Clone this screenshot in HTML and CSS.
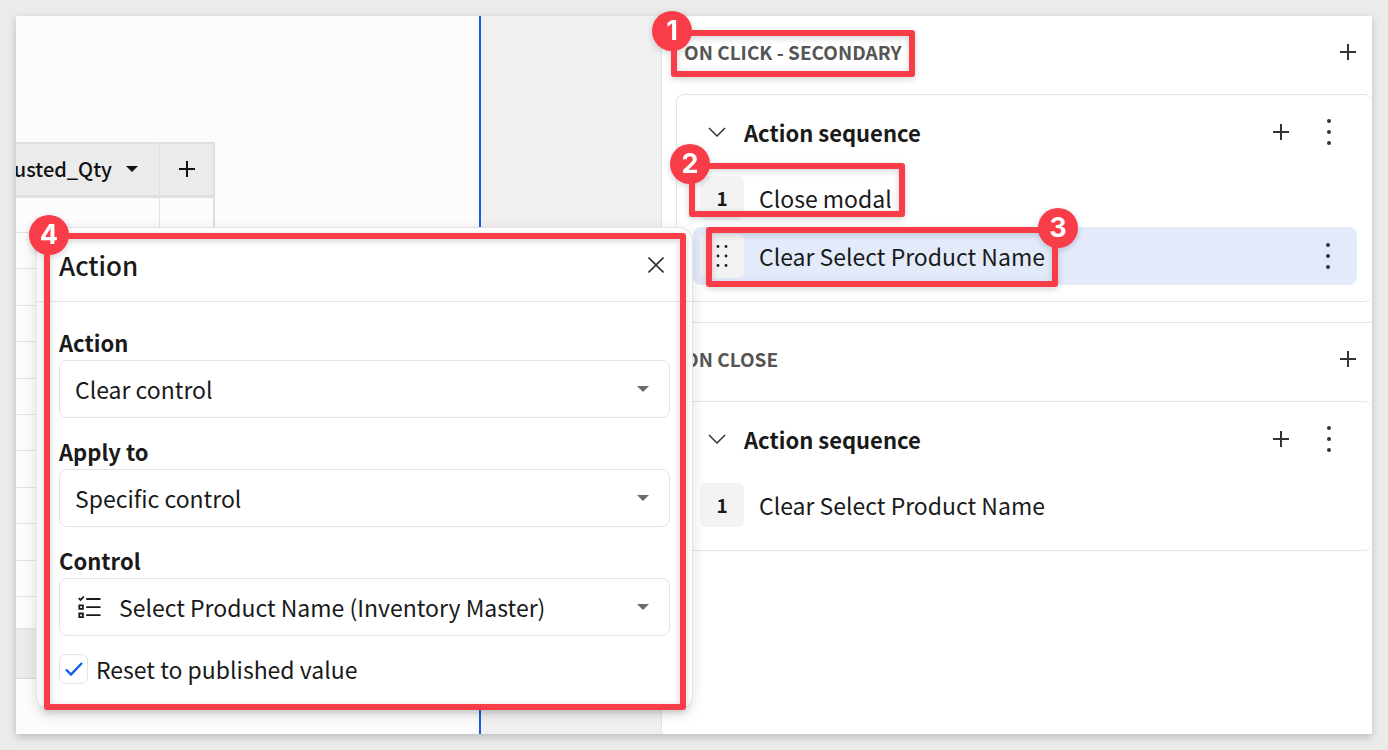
FILE: index.html
```html
<!DOCTYPE html>
<html lang="en">
<head>
<meta charset="utf-8">
<meta name="viewport" content="width=device-width, initial-scale=1">
<title>Action sequences</title>
<link rel="stylesheet" href="styles.css">
</head>
<body>
<svg width="0" height="0" class="defs" aria-hidden="true">
  <symbol id="plus" viewBox="0 0 16 16"><path d="M8 0v16M0 8h16" fill="none" stroke="currentColor" stroke-width="2"/></symbol>
  <symbol id="dots" viewBox="0 0 6 28"><g fill="currentColor"><circle cx="3" cy="3" r="2"/><circle cx="3" cy="14" r="2"/><circle cx="3" cy="25" r="2"/></g></symbol>
  <symbol id="chevron" viewBox="0 0 18 10"><path d="M1 1l8 8 8-8" fill="none" stroke="currentColor" stroke-width="1.5"/></symbol>
  <symbol id="caret" viewBox="0 0 12 6"><path d="M0 0h12L6 6z" fill="currentColor"/></symbol>
</svg>
<main class="frame">
  <section class="sheet">
    <table class="grid">
      <thead>
        <tr>
          <th class="col-name"><div class="col-head"><span>usted_Qty</span><svg class="caret"><use href="#caret"/></svg></div></th>
          <th class="col-add"><button class="icon-btn" aria-label="Add column"><svg class="plus"><use href="#plus"/></svg></button></th>
        </tr>
      </thead>
      <tbody>
        <tr><td></td><td></td></tr>
        <tr><td></td><td></td></tr>
        <tr><td></td><td></td></tr>
        <tr><td></td><td></td></tr>
        <tr><td></td><td></td></tr>
        <tr><td></td><td></td></tr>
        <tr><td></td><td></td></tr>
        <tr><td></td><td></td></tr>
        <tr><td></td><td></td></tr>
        <tr><td></td><td></td></tr>
        <tr><td></td><td></td></tr>
        <tr><td></td><td></td></tr>
      </tbody>
      <tfoot><tr><td></td><td></td></tr></tfoot>
    </table>
  </section>
  <div class="gutter"></div>
  <aside class="panel">
    <section class="event">
      <header class="event-head">
        <h2 class="event-title">ON CLICK - SECONDARY<span class="mark mark-title"><b class="pin">1</b></span></h2>
        <button class="icon-btn" aria-label="Add sequence"><svg class="plus"><use href="#plus"/></svg></button>
      </header>
      <div class="card">
        <div class="card-head">
          <button class="icon-btn" aria-label="Collapse"><svg class="chevron"><use href="#chevron"/></svg></button>
          <h3 class="card-title">Action sequence</h3>
          <button class="icon-btn" aria-label="Add action"><svg class="plus"><use href="#plus"/></svg></button>
          <button class="icon-btn" aria-label="Sequence menu"><svg class="dots"><use href="#dots"/></svg></button>
        </div>
        <ol class="steps">
          <li class="step"><span class="step-wrap"><span class="num">1</span><span class="step-name">Close modal</span><span class="mark mark-step"><b class="pin">2</b></span></span></li>
          <li class="step selected">
            <span class="step-wrap"><span class="num"><svg class="drag" viewBox="0 0 12 24"><g fill="currentColor"><circle cx="2" cy="2.500" r="1.400"/><circle cx="10" cy="2.500" r="1.400"/><circle cx="2" cy="12" r="1.400"/><circle cx="10" cy="12" r="1.400"/><circle cx="2" cy="21.500" r="1.400"/><circle cx="10" cy="21.500" r="1.400"/></g></svg></span><span class="step-name">Clear Select Product Name</span><span class="mark mark-selected"><b class="pin pin-right">3</b></span></span>
            <button class="icon-btn" aria-label="Action menu"><svg class="dots"><use href="#dots"/></svg></button>
          </li>
        </ol>
      </div>
    </section>
    <section class="event">
      <header class="event-head">
        <h2 class="event-title">ON CLOSE</h2>
        <button class="icon-btn" aria-label="Add sequence"><svg class="plus"><use href="#plus"/></svg></button>
      </header>
      <div class="card">
        <div class="card-head">
          <button class="icon-btn" aria-label="Collapse"><svg class="chevron"><use href="#chevron"/></svg></button>
          <h3 class="card-title">Action sequence</h3>
          <button class="icon-btn" aria-label="Add action"><svg class="plus"><use href="#plus"/></svg></button>
          <button class="icon-btn" aria-label="Sequence menu"><svg class="dots"><use href="#dots"/></svg></button>
        </div>
        <ol class="steps">
          <li class="step"><span class="step-wrap"><span class="num">1</span><span class="step-name">Clear Select Product Name</span></span></li>
        </ol>
      </div>
    </section>
  </aside>
  <div class="dialog" role="dialog" aria-labelledby="dialog-title">
    <header class="dialog-head">
      <h2 id="dialog-title" class="dialog-title">Action</h2>
      <button class="icon-btn" aria-label="Close"><svg class="close" viewBox="0 0 16 16"><path d="M.5.5l15 15M15.500.5l-15 15" fill="none" stroke="currentColor" stroke-width="1.600"/></svg></button>
    </header>
    <form class="dialog-body">
      <div class="field">
        <label for="action">Action</label>
        <div class="pick"><select id="action"><option>Clear control</option></select><svg class="caret"><use href="#caret"/></svg></div>
      </div>
      <div class="field">
        <label for="apply">Apply to</label>
        <div class="pick"><select id="apply"><option>Specific control</option></select><svg class="caret"><use href="#caret"/></svg></div>
      </div>
      <div class="field">
        <label for="control">Control</label>
        <div class="pick with-icon">
          <svg class="list" viewBox="0 0 24 24"><g fill="none" stroke="currentColor" stroke-width="1.800"><path d="M.8 3.200l1.700 1.700L5.800 1.600M8.200 4H22.500M8.200 12.200H22.500M8.200 20.200H22.500"/><path d="M1.300 10.300h3.600v3.600H1.300zM1.300 18.500h3.600v3.600H1.300z"/></g></svg>
          <select id="control"><option>Select Product Name (Inventory Master)</option></select><svg class="caret"><use href="#caret"/></svg>
        </div>
      </div>
      <label class="check"><span class="box"><input type="checkbox" checked><svg class="tick" viewBox="0 0 18 14"><path d="M1 7.500l5 5L17 1" fill="none" stroke="currentColor" stroke-width="2.400"/></svg></span>Reset to published value</label>
    </form>
    <span class="mark mark-dialog"><b class="pin pin-dialog">4</b></span>
  </div>
</main>
</body>
</html>
```
FILE: styles.css
```css
:root {
  --line: #e3e3e3;
  --ink: #1a1a1a;
  --red: #f83d48;
}

* { box-sizing: border-box; }

body {
  margin: 0;
  padding: 16px;
  background: #ebebeb;
  color: var(--ink);
  font-family: "Noto Sans CJK SC", "Noto Sans", sans-serif;
  font-size: 23px;
  line-height: 32px;
}

h2, h3 { margin: 0; }

svg { display: block; flex: none; }
.defs { position: absolute; }
.plus { width: 16px; height: 16px; }
.dots { width: 6px; height: 28px; }
.chevron { width: 18px; height: 10px; }
.caret { width: 12px; height: 6px; }
.drag { width: 12px; height: 24px; }
.close { width: 16px; height: 16px; }

.icon-btn {
  display: flex;
  padding: 0;
  border: 0;
  background: none;
  color: #333;
}

.frame {
  position: relative;
  display: grid;
  grid-template-columns: 465fr 180fr 711fr;
  min-height: calc(100vh - 32px);
  background: #fff;
  box-shadow: 0 3px 8px rgba(0, 0, 0, 0.2);
}

/* Spreadsheet */
.sheet {
  padding-top: 126px;
  background: #fcfcfc;
  border-right: 2px solid #1660e0;
}

.gutter { background: #f0f0f0; }

.grid {
  width: 199px;
  table-layout: fixed;
  border-collapse: separate;
  border-spacing: 0;
  color: #111;
}

.grid th {
  height: 56px;
  padding: 0 0 2px;
  background: #ebebeb;
  border-top: 2px solid #e0e0e0;
  border-bottom: 3px solid #e0e0e0;
}

.grid td {
  height: 36px;
  padding: 0;
  border-bottom: 1px solid var(--line);
}

.grid tbody tr:nth-child(5n + 3) td,
.grid tbody tr:nth-child(5n + 5) td { height: 37px; }
.grid tbody tr:first-child td { height: 35px; }
.grid tbody tr:last-child td { height: 32px; }
.grid tfoot td { height: 50px; background: #ebebeb; border-color: #dcdcdc; }
.grid tr > :first-child { width: 144px; border-right: 1px solid var(--line); }
.grid tr > :last-child { width: 55px; border-right: 2px solid #e0e0e0; }

.col-head {
  display: flex;
  justify-content: flex-end;
  align-items: center;
  gap: 14px;
  padding-right: 21px;
  overflow: hidden;
  font-size: 20px;
  font-weight: 500;
}

.col-head span { flex: none; }

.col-add .icon-btn { width: 100%; justify-content: center; color: #111; }

/* Event panel */
.panel { border-left: 1px solid var(--line); }
.event + .event { margin-top: 20px; border-top: 1px solid var(--line); }

.event-head {
  display: flex;
  justify-content: space-between;
  align-items: center;
  height: 72px;
  margin-bottom: 6px;
  padding: 0 16px 0 22px;
}

.event-title {
  position: relative;
  color: #555;
  font-size: 19px;
  font-weight: 700;
  line-height: 30px;
}

.card {
  margin-left: 14px;
  padding: 0 15px 16px 16px;
  border: 1px solid var(--line);
  border-right-width: 0;
  border-radius: 8px;
}

.card-head {
  display: flex;
  align-items: center;
  height: 74px;
  padding: 0 25px 0 15px;
}

.card-title {
  flex: 1;
  margin-left: 18px;
  font-size: 22px;
  font-weight: 700;
}

.card-head .dots { margin-left: 37px; }

.steps { margin: 0; padding: 0; list-style: none; }

.step {
  display: flex;
  justify-content: space-between;
  align-items: center;
  height: 58px;
  padding: 0 26px 0 7px;
  border-radius: 8px;
}

.step.selected { background: #e3eafa; }
.step-wrap { position: relative; display: flex; align-items: center; gap: 15px; }

.num {
  display: flex;
  justify-content: center;
  align-items: center;
  width: 44px;
  height: 44px;
  border-radius: 6px;
  background: #f3f3f3;
  font-size: 19px;
  font-weight: 700;
}

/* Action dialog */
.dialog {
  position: absolute;
  top: 211px;
  left: 20px;
  width: 657px;
  background: #fff;
  border: 1px solid var(--line);
  border-radius: 14px;
  box-shadow: 0 4px 14px rgba(0, 0, 0, 0.12);
}

.dialog-head {
  display: flex;
  justify-content: space-between;
  align-items: center;
  height: 74px;
  padding: 0 28px 0 22px;
  border-bottom: 1px solid var(--line);
}

.dialog-title { font-size: 26px; font-weight: 500; }

.dialog-body {
  display: flex;
  flex-direction: column;
  gap: 17px;
  padding: 24px 22px;
}

.field label {
  display: block;
  padding-bottom: 2px;
  font-size: 22px;
  font-weight: 700;
}

.pick { position: relative; }

.pick select {
  display: block;
  width: 100%;
  height: 58px;
  padding: 0 44px 0 15px;
  border: 1px solid var(--line);
  border-radius: 8px;
  background: #fff;
  color: inherit;
  font: inherit;
  appearance: none;
}

.pick.with-icon select { padding-left: 59px; }

.pick .caret {
  position: absolute;
  top: 26px;
  right: 21px;
  color: #6b6b6b;
  pointer-events: none;
}

.list {
  position: absolute;
  top: 17px;
  left: 19px;
  width: 24px;
  height: 24px;
}

.check { display: flex; align-items: center; gap: 8px; }
.box { display: grid; place-items: center; }

.box input {
  grid-area: 1 / 1;
  width: 29px;
  height: 30px;
  margin: 0;
  border: 1px solid var(--line);
  border-radius: 7px;
  background: #fff;
  appearance: none;
}

.tick { grid-area: 1 / 1; z-index: 1; width: 18px; height: 14px; color: #0d5eea; }

/* Numbered callouts */
.mark {
  position: absolute;
  border: 6px solid var(--red);
  border-radius: 3px;
  filter: drop-shadow(0 2px 3px rgba(0, 0, 0, 0.18));
  pointer-events: none;
}

.mark-title { inset: -7px -14px -10px -13px; }
.mark-step { inset: -13px -13px 3px -11px; }
.mark-selected { inset: -7px -13px -9px 6px; }
.mark-dialog { inset: 5px 6px -1px 7px; }

.pin {
  position: absolute;
  top: -25px;
  left: -25px;
  display: grid;
  place-items: center;
  width: 40px;
  height: 40px;
  border-radius: 50%;
  background: var(--red);
  color: #fff;
  font: 700 27px/40px Inter, sans-serif;
}

.pin-right { right: -26px; left: auto; }
.pin-dialog { top: -24px; left: -21px; }
```
